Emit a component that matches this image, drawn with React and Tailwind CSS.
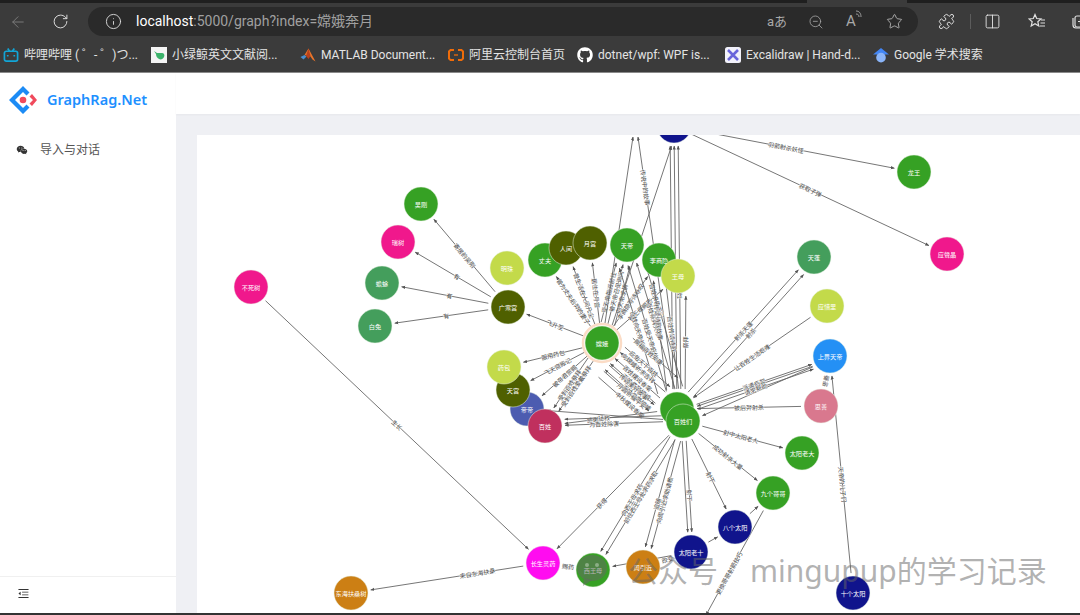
import { ArrowLeft, RotateCw, Info, ZoomOut, Star, Puzzle, Columns2 } from "lucide-react";
import { FaGithub } from "react-icons/fa";
import { AiFillWechat, AiOutlineMenuFold } from "react-icons/ai";

const GREEN = "#36a124";
const OLIVE = "#4f6000";
const LIME = "#c3da4a";
const PINK = "#f0188c";
const SEA = "#449e5c";
const NAVY = "#10148c";
const ORANGE = "#cc7f14";

// graph nodes, drawn in this order: [key, label, x, y, colour]
const nodes = [
  ["top", "", 674, 126, NAVY],
  ["long", "龙王", 914, 172, GREEN],
  ["ying", "应聲晶", 947, 254, PINK],
  ["tianpeng", "天蓬", 814, 257, SEA],
  ["ling", "应惜里", 827, 306, LIME],
  ["shang", "上界天帝", 830, 356, "#2490f5"],
  ["si", "思善", 821, 406, "#d9788e"],
  ["lao", "太阳老大", 802, 453, GREEN],
  ["jiu", "九个哥哥", 773, 493, GREEN],
  ["ba", "八个太阳", 735, 527, NAVY],
  ["shi", "太阳老十", 691, 552, NAVY],
  ["ten", "十个太阳", 853, 593, NAVY],
  ["zhou", "周引近", 643, 567, ORANGE],
  ["xi", "西王母", 593, 570, GREEN],
  ["yao", "长生灵药", 543, 563, "#ff0cf0"],
  ["fu", "东海扶桑树", 351, 593, ORANGE],
  ["busi", "不死树", 251, 287, PINK],
  ["wu", "吴刚", 421, 204, GREEN],
  ["rui", "瑞树", 398, 242, PINK],
  ["chan", "蟾蜍", 382, 283, SEA],
  ["tu", "白兔", 375, 326, SEA],
  ["ming", "明珠", 507, 268, LIME],
  ["guang", "广寒宫", 508, 307, OLIVE],
  ["wen", "丈夫", 545, 260, GREEN],
  ["ren", "人间", 566, 248, OLIVE],
  ["yue", "月宫", 590, 243, OLIVE],
  ["di", "天帝", 627, 245, GREEN],
  ["li", "李商隐", 659, 260, GREEN],
  ["wang", "王母", 678, 276, LIME],
  ["e", "嫦娥", 602, 343, GREEN],
  ["di2", "帝帝", 527, 409, "#4c5cb0"],
  ["gong", "天宫", 513, 390, OLIVE],
  ["bao", "药包", 504, 367, LIME],
  ["bai", "百姓", 545, 426, "#c0305e"],
  ["hub", "", 677, 409, GREEN],
  ["men", "百姓们", 683, 421, GREEN],
];

// edges: [from, to, label, label position along the line, sideways shift]
const edges = [
  ["top", "long", "羽箭射杀妖怪", 0.46, 0],
  ["top", "ying", "获取子弹", 0.5, 0],
  ["guang", "wu", "寄居的吴刚", 0.5, 0],
  ["guang", "rui", "有", 0.45, 0],
  ["guang", "chan", "有", 0.45, 0],
  ["guang", "tu", "有", 0.45, 0],
  ["e", "guang", "飞升至", 0.5, 0],
  ["e", "bao", "服用药包", 0.5, 0],
  ["e", "gong", "飞天宫殿记", 0.5, 0],
  ["e", "di2", "被帝君赏赐", 0.5, 0],
  ["e", "bai", "受到百姓爱戴祭拜", 0.5, -3],
  ["e", "bai", "受到百姓祭拜", 0.55, 3],
  ["e", "wen", "曾为丈夫后羿的妻子", 0.5, 0],
  ["e", "ren", "曾生活在人间凡尘", 0.5, 0],
  ["e", "yue", "居住在月宫", 0.5, 0],
  ["e", "di", "受天帝指派前往", 0.5, -6],
  ["e", "di", "被天帝召见询问", 0.55, 1],
  ["e", "di", "向天帝求情", 0.45, 8],
  ["e", "li", "李商隐写诗咏叹", 0.5, 0],
  ["e", "wang", "被王母赐药", 0.5, 0],
  ["e", "[633,137]", "", 0.5, 0],
  ["e", "top", "", 0.5, 4],
  ["hub", "[638,137]", "传说中的故事", 0.8, 0],
  ["hub", "top", "", 0.5, -4],
  ["hub", "top", "", 0.5, 0],
  ["hub", "top", "帮助百姓", 0.42, 4],
  ["hub", "di", "百姓向天帝祈求", 0.5, -14],
  ["hub", "di", "百姓受天帝庇佑", 0.42, -5],
  ["hub", "di", "百姓祭拜天帝", 0.55, 4],
  ["hub", "di", "百姓求告无门", 0.68, 12],
  ["hub", "wang", "祭拜", 0.5, 8],
  ["hub", "li", "百姓传颂诗歌", 0.5, 4],
  ["hub", "li", "传颂诗歌故事", 0.62, -8],
  ["hub", "e", "百姓爱戴嫦娥", 0.3, -18],
  ["hub", "e", "百姓祭拜嫦娥", 0.42, -10],
  ["hub", "e", "百姓摆设香案", 0.5, -3],
  ["hub", "e", "向嫦娥祈求吉祥", 0.6, 5],
  ["e", "hub", "庇佑天下百姓", 0.42, -12],
  ["e", "hub", "传颂美好故事", 0.55, 12],
  ["e", "hub", "月圆祈福平安", 0.62, 20],
  ["e", "hub", "赐福百姓安康", 0.35, -24],
  ["e", "hub", "中秋摆设香案", 0.7, 28],
  ["men", "di2", "", 0.5, 0],
  ["hub", "bai", "感谢", 0.7, 0],
  ["men", "bai", "为百姓除害", 0.6, 0],
  ["men", "bai", "拯救", 0.6, 6],
  ["hub", "tianpeng", "射杀天蓬", 0.5, -3],
  ["hub", "tianpeng", "射杀", 0.52, 4],
  ["ling", "hub", "让百姓生活艰难", 0.5, 0],
  ["shang", "hub", "", 0.5, -4],
  ["shang", "men", "", 0.5, -3],
  ["hub", "shang", "派遣后羿", 0.5, 2],
  ["hub", "shang", "请求帮助", 0.5, 7],
  ["si", "hub", "被后羿射杀", 0.5, 0],
  ["men", "lao", "射中太阳老大", 0.48, 0],
  ["men", "jiu", "成功射杀大量", 0.5, 0],
  ["men", "ba", "射下", 0.55, 0],
  ["men", "shi", "射下", 0.6, -2],
  ["men", "shi", "", 0.6, 2],
  ["men", "zhou", "向周引近求助请教", 0.55, -3],
  ["men", "zhou", "追随", 0.6, 3],
  ["men", "xi", "前往西王母处求药求取", 0.5, -3],
  ["men", "xi", "向西王母求药", 0.55, 3],
  ["men", "yao", "获得", 0.6, 0],
  ["busi", "yao", "生长", 0.5, 0],
  ["yao", "fu", "来自东海扶桑", 0.3, 0],
  ["xi", "yao", "赐药", 0.5, 0],
  ["shi", "zhou", "改变", 0.45, 0],
  ["shi", "xi", "居住", 0.6, 0],
  ["shi", "ba", "", 0.5, 0],
  ["ba", "jiu", "", 0.5, 0],
  ["jiu", "[706,615]", "更换哥哥射箭技巧", 0.6, 0],
  ["ten", "shang", "天帝的儿子们", 0.45, 0],
  ["si", "shang", "思善", 0.5, 0],
];

const point = (key) => {
  if (key[0] === "[") {
    const [x, y] = JSON.parse(key);
    return { x, y, r: 0 };
  }
  const n = nodes.find((item) => item[0] === key);
  return { x: n[2], y: n[3], r: 20 };
};

const Edge = ({ from, to, label, at, shift }) => {
  const a = point(from);
  const b = point(to);
  const dx = b.x - a.x;
  const dy = b.y - a.y;
  const len = Math.hypot(dx, dy);
  const ux = dx / len;
  const uy = dy / len;
  const x1 = a.x + ux * a.r - uy * shift;
  const y1 = a.y + uy * a.r + ux * shift;
  const x2 = b.x - ux * b.r - uy * shift;
  const y2 = b.y - uy * b.r + ux * shift;
  const lx = x1 + (x2 - x1) * at;
  const ly = y1 + (y2 - y1) * at;
  let angle = (Math.atan2(dy, dx) * 180) / Math.PI;
  if (angle > 90) angle -= 180;
  if (angle < -90) angle += 180;
  return (
    <g>
      <line x1={x1} y1={y1} x2={x2} y2={y2} stroke="#666" strokeWidth="0.9" markerEnd="url(#arrow)" />
      {label && (
        <text
          x={lx}
          y={ly}
          transform={`rotate(${angle} ${lx} ${ly})`}
          textAnchor="middle"
          dominantBaseline="central"
          fontSize="6"
          fill="#444"
          stroke="#fff"
          strokeWidth="0.7"
          paintOrder="stroke"
        >
          {label}
        </text>
      )}
    </g>
  );
};

const Graph = () => (
  <svg viewBox="197 135 883 478" className="block w-full h-full font-['Noto_Sans_CJK_SC',sans-serif]">
    <defs>
      <marker id="arrow" markerWidth="4" markerHeight="4" refX="3.6" refY="2" orient="auto" markerUnits="userSpaceOnUse">
        <path d="M0 0.4 L4 2 L0 3.6 Z" fill="#555" />
      </marker>
    </defs>
    {edges.map(([from, to, label, at, shift], i) => (
      <Edge key={i} from={from} to={to} label={label} at={at} shift={shift} />
    ))}
    <circle cx="602" cy="343" r="19" fill="none" stroke="#fbdcc6" strokeWidth="2.5" />
    {nodes.map(([key, label, x, y, color]) => (
      <g key={key}>
        <circle cx={x} cy={y} r="17" fill={color} stroke="#e8f2e4" strokeWidth="0.5" />
        <text x={x} y={y} textAnchor="middle" dominantBaseline="central" fontSize="6.2" fill="#fff">
          {label}
        </text>
      </g>
    ))}
  </svg>
);

// bookmarks bar icons
const Bili = () => (
  <svg width="16" height="16" viewBox="0 0 17 16" fill="none" stroke="#12a5d6" strokeWidth="1.8">
    <rect x="1.5" y="4" width="14" height="10.5" rx="2" />
    <path d="M5 1l2 3M12 1l-2 3" />
    <path d="M5 8v1.5M12 8v1.5" />
  </svg>
);

const Whale = () => (
  <svg width="16" height="16" viewBox="0 0 16 16">
    <rect width="16" height="16" fill="#f4f4f4" />
    <path d="M3 4l3 2h5c2 0 3 2 2 4-1 2-3 3-5 2-2-1-3-3-3-5z" fill="#3bb36b" />
  </svg>
);

const Matlab = () => (
  <svg width="16" height="15" viewBox="0 0 15 15">
    <path d="M0 9l4-2 2 1.500-3 3z" fill="#4a8fd0" />
    <path d="M4 7l4-6.500 7 13-3-2-2-3z" fill="#e8742a" />
    <path d="M8 .5L5.500 8 8 11l2-3z" fill="#b8411c" />
  </svg>
);

const Aliyun = () => (
  <svg width="16" height="12" viewBox="0 0 16 12" fill="none" stroke="#ef6c0a" strokeWidth="2">
    <path d="M6 1H2.500L1 2.500v7L2.500 11H6M10 1h3.500L15 2.500v7L13.500 11H10" />
    <path d="M6 6h4" strokeWidth="1.300" />
  </svg>
);

const Excalidraw = () => (
  <svg width="16" height="16" viewBox="0 0 16 16">
    <rect width="16" height="16" rx="2.500" fill="#f2f2fb" />
    <path d="M3 3l10 10M13 3L6 10M3 13l3-3" stroke="#6965db" strokeWidth="2.600" fill="none" />
  </svg>
);

const Scholar = () => (
  <svg width="16" height="15" viewBox="0 0 15 14">
    <path d="M7.500 0L15 6H0z" fill="#4285f4" />
    <circle cx="7.500" cy="9" r="4.500" fill="#8ab4f8" />
  </svg>
);

const bookmarks = [
  { icon: <Bili />, label: "哔哩哔哩 ( ゜- ゜)つ...", width: "w-[148px]" },
  { icon: <Whale />, label: "小绿鲸英文文献阅...", width: "w-[149px]" },
  { icon: <Matlab />, label: "MATLAB Document...", width: "w-[148px]" },
  { icon: <Aliyun />, label: "阿里云控制台首页", width: "w-[129px]" },
  { icon: <FaGithub className="text-[16px] text-white" />, label: "dotnet/wpf: WPF is...", width: "w-[148px]" },
  { icon: <Excalidraw />, label: "Excalidraw | Hand-d...", width: "w-[148px]" },
  { icon: <Scholar />, label: "Google 学术搜索", width: "w-[130px]" },
];

const BrowserBar = () => (
  <div className="bg-[#3b3b3b] font-['Roboto','Noto_Sans_CJK_SC',sans-serif] text-[#d4d4d4]">
    <div className="flex h-[3px] bg-[#1f1f1f]">
      <div className="ml-[807px] w-[100px] bg-[#3b3b3b]" />
    </div>
    <div className="flex h-[37px] items-center">
      <ArrowLeft size={18} strokeWidth={1.3} className="ml-[9px] shrink-0 text-[#7a7a7a]" />
      <RotateCw size={17} strokeWidth={1.4} className="ml-[25px] shrink-0 text-[#dcdcdc]" />
      <div className="ml-[19px] flex h-[29px] w-[830px] shrink-0 items-center rounded-full bg-[#2a2a2a] text-[14px]">
        <Info size={17} strokeWidth={1.3} className="ml-[17px] text-[#dcdcdc]" />
        <span className="ml-[14px] text-white">localhost</span>
        <span className="text-[#a0a0a0]">:5000/graph?index=嫦娥奔月</span>
        <span className="ml-auto text-[13px] text-[#a8a8a8]">aあ</span>
        <ZoomOut size={16} strokeWidth={1.2} className="ml-[21px] text-[#a8a8a8]" />
        <span className="ml-[22px] flex w-[18px] text-[15px] text-[#a8a8a8]">
          A
          <svg width="6" height="10" viewBox="0 0 6 10" fill="none" stroke="currentColor" strokeWidth="0.9">
            <path d="M0 4c2 0 3 1 3 3M0 1c3 0 5 2 5 6" />
          </svg>
        </span>
        <Star size={17} strokeWidth={1.2} className="ml-[22px] mr-[15px] text-[#bdbdbd]" />
      </div>
      <Puzzle size={17} strokeWidth={1.4} className="ml-[20px] shrink-0 text-[#e0e0e0]" />
      <div className="ml-[15px] h-[15px] w-px shrink-0 bg-[#5c5c5c]" />
      <Columns2 size={17} strokeWidth={1.3} className="ml-[13px] shrink-0 text-[#e0e0e0]" />
      <svg width="18" height="17" viewBox="0 0 18 17" fill="none" stroke="#e0e0e0" strokeWidth="1.2" className="ml-[27px] shrink-0">
        <path d="M7 1.500l1.700 4 4.300.4-3.200 2.800 1 4.300-3.800-2.300-3.800 2.300 1-4.300L1 5.900l4.300-.4z" />
        <path d="M13 7h4M12.500 10h4.500M12 13h5" />
      </svg>
      <svg width="20" height="17" viewBox="0 0 20 17" fill="none" stroke="#e0e0e0" strokeWidth="1.2" className="ml-[25px] shrink-0">
        <rect x="4" y="3" width="11" height="11" rx="2" />
        <path d="M2 5v7c0 2 1 3 3 3h6M7 8.500h5M9.500 6v5" />
      </svg>
    </div>
    <div className="flex h-[32px] items-center overflow-hidden pb-[2px] pl-[3px] text-[12px] text-[#e4e4e4]">
      {bookmarks.map((item) => (
        <div key={item.label} className={`flex shrink-0 items-center gap-[5px] whitespace-nowrap ${item.width}`}>
          {item.icon}
          <span>{item.label}</span>
        </div>
      ))}
    </div>
  </div>
);

const Logo = () => (
  <svg width="28" height="28" viewBox="0 0 28 28" className="shrink-0">
    <path d="M14 0L0 14l14 14 6.500-6.500-3-3L14 22 6 14l8-8 3.500 3.500 3-3z" fill="#1c8bf5" />
    <path d="M20.500 10.500L24 14l-3.500 3.500 2.500 2.500 5-6-5-6z" fill="#f04a5c" />
    <circle cx="14" cy="14" r="3.300" fill="#f04a5c" />
  </svg>
);

const Sidebar = () => (
  <aside className="flex w-[176px] shrink-0 flex-col bg-white">
    <div className="flex h-[54px] items-center gap-[10px] pl-[9px]">
      <Logo />
      <span className="text-[14.5px] font-semibold text-[#1e90ff]">GraphRag.Net</span>
    </div>
    <div className="mt-[7px] flex h-[32px] items-center gap-[12px] pl-[16px] text-[12px] text-[#555]">
      <AiFillWechat className="text-[12px] text-[#333]" />
      <span>导入与对话</span>
    </div>
    <div className="mt-auto flex h-[37px] items-center border-t border-[#f0f0f0] pb-[4px] pl-[17px]">
      <AiOutlineMenuFold className="text-[13px] text-[#333]" />
    </div>
  </aside>
);

export default function App() {
  return (
    <div className="relative flex h-[615px] w-[1080px] flex-col overflow-hidden bg-[#333] font-['Noto_Sans','Noto_Sans_CJK_SC',sans-serif]">
      <BrowserBar />
      <div className="flex h-[541px] border-t border-[#8a8a8a]">
        <Sidebar />
        <main className="flex flex-1 flex-col bg-[#eff0f4]">
          <div className="h-[41px] shrink-0 bg-white shadow-[0_1px_2px_rgba(0,0,0,0.04)]" />
          <div className="ml-[21px] mt-[21px] flex-1 overflow-hidden bg-white">
            <Graph />
          </div>
        </main>
      </div>
      {/* watermark over the page */}
      <div className="absolute left-[576px] top-[548px] flex items-center text-[30px] leading-[46px] text-[#666]/50">
        <svg width="36" height="34" viewBox="0 0 36 34" className="mr-[16px] fill-current">
          <ellipse cx="16" cy="14" rx="15" ry="13" />
          <path d="M8 24l-1 8 9-6z" />
          <circle cx="11" cy="11" r="2" fill="#fff" fillOpacity="0.35" />
          <circle cx="21" cy="11" r="2" fill="#fff" fillOpacity="0.35" />
        </svg>
        <span>公众号</span>
        <span className="ml-[32px]">mingupup</span>
        <span>的学习记录</span>
      </div>
    </div>
  );
}
